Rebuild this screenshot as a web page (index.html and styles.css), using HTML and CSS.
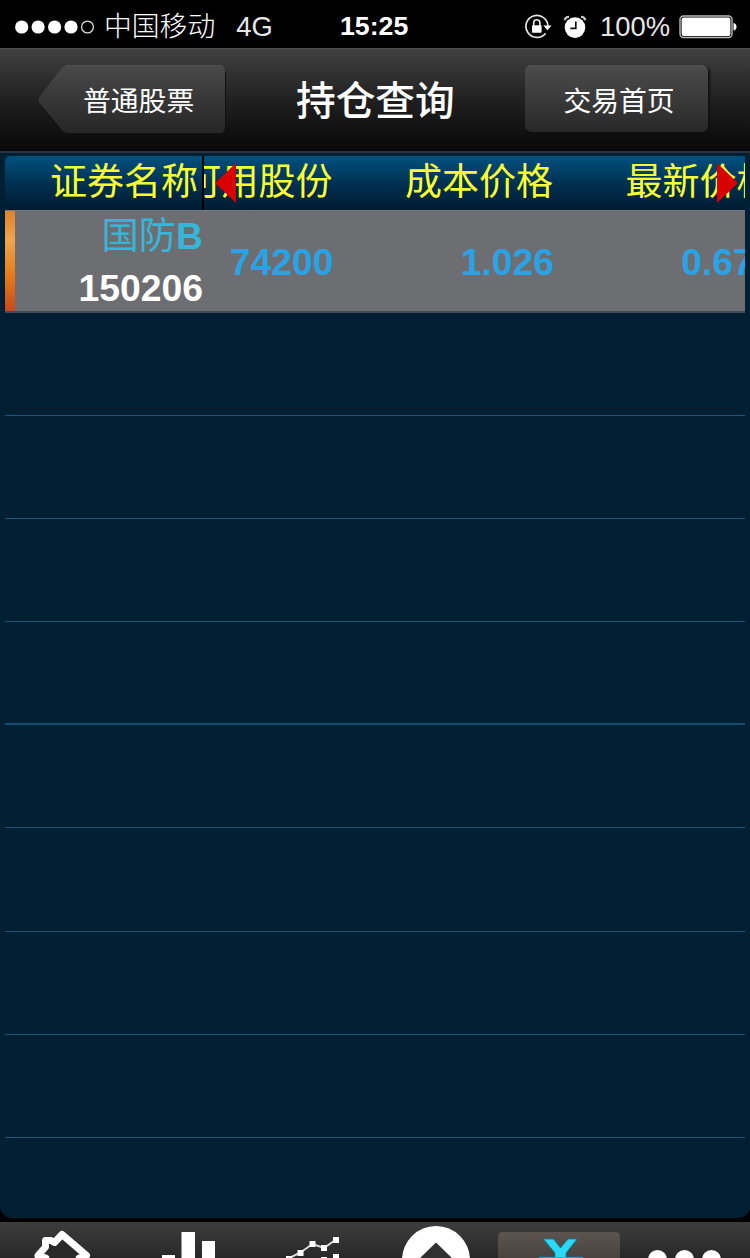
FILE: index.html
```html
<!DOCTYPE html>
<html lang="zh-CN">
<head>
<meta charset="utf-8">
<title>持仓查询</title>
<link rel="stylesheet" href="styles.css">
</head>
<body>
<div class="screen">
  <header class="status">
    <div class="status-left">
      <svg class="signal" width="80" height="16" viewBox="0 0 80 16" fill="#fff">
        <circle cx="6.7" cy="8" r="6.6"/><circle cx="23.1" cy="8" r="6.6"/><circle cx="39.6" cy="8" r="6.6"/><circle cx="56" cy="8" r="6.6"/>
        <circle cx="72.5" cy="8" r="5.9" fill="none" stroke="#ddd" stroke-width="1.3"/>
      </svg>
      <span class="carrier">中国移动</span>
      <span class="network">4G</span>
    </div>
    <span class="clock">15:25</span>
    <div class="status-right">
      <svg class="lock" width="30" height="26" viewBox="0 0 30 26">
        <path d="M21.600 19.200A11 11 0 1 1 23.900 12" fill="none" stroke="#e4e4e4" stroke-width="1.700"/>
        <path d="M19.400 11.600h8.200l-4.100 4.600z" fill="#fff"/>
        <rect x="8" y="11.300" width="9.600" height="7.500" rx=".8" fill="#fff"/>
        <path d="M9.700 12V8.800a3.100 3.100 0 0 1 6.200 0V12" fill="none" stroke="#eee" stroke-width="1.600"/>
      </svg>
      <svg class="alarm" width="24" height="24" viewBox="0 0 24 24">
        <circle cx="12" cy="12.600" r="10.300" fill="#fff"/>
        <path d="M12.800 6.500V13.300H7.300" fill="none" stroke="#111" stroke-width="1.700"/>
        <path d="M1.600 5.200Q2.500 1.900 6.100 1.800M17.900 1.800Q21.500 1.900 22.400 5.200" fill="none" stroke="#ccc" stroke-width="2"/>
      </svg>
      <span class="percent">100%</span>
      <svg class="battery" width="58" height="24" viewBox="0 0 58 24">
        <rect x="1" y="1" width="52" height="21.500" rx="3.500" fill="none" stroke="#bbb" stroke-width="1.400"/>
        <rect x="2.600" y="2.600" width="48.800" height="18.300" rx="2" fill="#fff"/>
        <path d="M54.500 8q3 .5 3 3.800t-3 3.800z" fill="#fff"/>
      </svg>
    </div>
  </header>

  <nav class="navbar">
    <div class="back">
      <svg class="back-shape" width="194" height="74" viewBox="0 0 194 74">
        <defs><linearGradient id="back" x1="0" y1="0" x2="0" y2="1"><stop offset="0" stop-color="#494949"/><stop offset="1" stop-color="#262626"/></linearGradient></defs>
        <path d="M30 3H182Q189 3 189 9V64Q189 70 182 70H30Q26 70 23 66L5 43Q1 37 5 32L22 9Q26 3 30 3Z" fill="#111"/>
        <path d="M31 0H182Q188 0 188 6V62Q188 68 182 68H31Q27 68 24 64L3 39Q0 35 3 31L23 5Q27 0 31 0Z" fill="url(#back)"/>
        <path d="M29 .5H184" stroke="#505050" fill="none"/>
      </svg>
      <span class="back-label">普通股票</span>
    </div>
    <h1 class="title">持仓查询</h1>
    <div class="home">交易首页</div>
  </nav>

  <main class="panel">
    <div class="table">
      <section class="names">
        <div class="head name-head">证券名称</div>
        <div class="holding name-cell">
          <span class="stock">国防<b>B</b></span>
          <span class="code">150206</span>
        </div>
      </section>
      <section class="values">
        <div class="head value-row"><span>可用股份</span><span>成本价格</span><span>最新价格</span></div>
        <div class="holding value-row numbers"><span>74200</span><span>1.026</span><span>0.670</span></div>
        <svg class="arrow arrow-left" width="22" height="40" viewBox="0 0 22 40"><path d="M0 20 21 0V40Z" fill="#d90000"/></svg>
        <svg class="arrow arrow-right" width="21" height="40" viewBox="0 0 21 40"><path d="M21 20 0 0V40Z" fill="#d90000"/></svg>
      </section>
    </div>
    <div class="empty"></div><div class="empty"></div><div class="empty"></div><div class="empty strong"></div><div class="empty"></div><div class="empty"></div><div class="empty"></div><div class="empty"></div>
  </main>

  <footer class="tabs">
    <div class="tab">
      <svg width="125" height="36" viewBox="0 0 125 36">
        <path d="M46 39V36L38 33.500 45.500 25V18.500H51L54.500 20.500 62 12.500 86.500 33.500 79 36V39" fill="#292929" stroke="#fff" stroke-width="7" stroke-linejoin="round"/>
      </svg>
    </div>
    <div class="tab">
      <svg width="125" height="36" viewBox="0 0 125 36" fill="#fff"><path d="M37 33h13v3H37zM56.500 10h13.500v26H56.500zM77 19h13v17H77z"/></svg>
    </div>
    <div class="tab">
      <svg width="125" height="36" viewBox="0 0 125 36">
        <path d="M30 40 38.500 36.500 50.500 30.500 62.500 22 74 26 86 17.500" fill="none" stroke="#ddd" stroke-width="2"/>
        <path d="M83 15h6v6h-6zM71 23h6v6h-6zM59.500 19h6v6h-6zM47.500 28h6v6h-6zM36 34h6v2h-6zM83 32h6v4h-6zM71 35h6v1h-6z" fill="#fff"/>
      </svg>
    </div>
    <div class="tab">
      <svg width="125" height="36" viewBox="0 0 125 36"><circle cx="61" cy="38" r="34" fill="#fff"/><path d="M42 39 61 20.500 80 39Z" fill="#303030"/></svg>
    </div>
    <div class="tab">
      <svg width="125" height="36" viewBox="0 0 125 36">
        <defs><linearGradient id="active" x1="0" y1="0" x2="0" y2="1"><stop offset="0" stop-color="#5b544f"/><stop offset="1" stop-color="#49433f"/></linearGradient></defs>
        <path d="M-2 36V15Q-2 10 3 10H115Q120 10 120 15V36Z" fill="url(#active)"/>
        <path d="M43.500 17H53.500L60.500 26 68 17H77L66 31V35H83V36H39V35H55V31Z" fill="#29d9f5" stroke="#087f9c" stroke-width=".8"/>
      </svg>
    </div>
    <div class="tab">
      <svg width="125" height="36" viewBox="0 0 125 36" fill="#fff"><circle cx="32.500" cy="37.500" r="9.500"/><circle cx="59.500" cy="37.500" r="9.500"/><circle cx="86.500" cy="37.500" r="9.500"/></svg>
    </div>
  </footer>
</div>
</body>
</html>
```
FILE: styles.css
```css
* { box-sizing: border-box; }
body {
  margin: 0;
  background: #000;
  color: #fff;
  font-family: "Liberation Sans", "Noto Sans CJK SC", sans-serif;
}
svg { display: block; flex: none; }
.screen {
  width: 750px;
  height: 1258px;
  overflow: hidden;
  display: flex;
  flex-direction: column;
}
.status {
  height: 48px;
  flex: none;
  display: grid;
  grid-template-columns: 340px 1fr auto;
  align-items: center;
  padding: 3px 13px 0 0;
  font-size: 27.4px;
  line-height: 47px;
  white-space: nowrap;
}
.status-left, .status-right { display: flex; align-items: center; height: 45px; }
.signal { margin-left: 15px; }
.carrier { margin-left: 9px; color: #fff; font-weight: 300; font-size: 27.8px; }
.network { margin-left: 21px; font-size: 27.3px; color: #e6e6e6; }
.clock { font-size: 26.7px; font-weight: 700; }
.alarm { margin-left: 9px; }
.percent { margin-left: 13px; color: #e6e6e6; }
.battery { margin-left: 9px; }

.navbar {
  height: 103px;
  flex: none;
  display: flex;
  align-items: flex-start;
  padding: 16px 42px 0 37px;
  background: linear-gradient(#414141, #202020 50%, #080808);
  border-top: 1px solid #4c4c4c;
}
.back { display: grid; width: 194px; height: 74px; }
.back > * { grid-area: 1 / 1; }
.back-label { padding: 1px 0 0 46px; font-size: 27.8px; line-height: 72px; }
.title { margin: 0 0 0 65px; width: 229px; font-size: 39.7px; font-weight: 500; line-height: 72px; }
.home {
  width: 183px;
  height: 67px;
  padding-left: 5px;
  border-radius: 7px;
  background: linear-gradient(#4c4c4c, #282828);
  box-shadow: inset 0 1px #525252, 2px 1px 2px #111;
  font-size: 27.8px;
  line-height: 73px;
  text-align: center;
}

.panel {
  height: 1067px;
  flex: none;
  padding: 3px 5px 0;
  background: #001f33;
  border-top: 2px solid #293440;
  border-radius: 0 0 12px 12px;
}
.table { display: flex; height: 157px; }
.names { width: 199px; flex: none; }
.values { position: relative; width: 541px; overflow: hidden; }
.head {
  height: 54px;
  background: linear-gradient(#00517f, #003153 50%, #001b30);
  color: #fbff32;
  font-size: 37px;
  line-height: 54px;
  white-space: nowrap;
}
.name-head {
  padding-left: 45px;
  border-right: 2px solid #000;
  border-radius: 5px 0 0;
}
.holding {
  height: 103px;
  background: #6d6e72;
  border-bottom: 2px solid #3e4b57;
  box-shadow: inset 0 1px #747a85;
  font-size: 37.3px;
  font-weight: 700;
}
.name-cell {
  display: flex;
  flex-direction: column;
  padding: 1px 1px 0 0;
  text-align: right;
  background: linear-gradient(#df8128, #efa44d 30%, #e67b18 65%, #c9481f) left / 10px 100% no-repeat, #6d6e72;
}
.stock, .code { line-height: 51px; height: 51px; }
.stock { color: #35b7d9; font-weight: 400; }
.code { padding-top: 1px; color: #fff; }
.value-row { display: flex; width: 573px; }
.value-row span { width: 220.500px; flex: none; text-align: right; }
.head.value-row span:first-child { margin-left: -92px; }
.numbers { line-height: 104px; color: #29a3e5; }
.numbers span:first-child { margin-left: -91px; }
.arrow { position: absolute; top: 7px; }
.arrow-left { left: 11px; }
.arrow-right { right: 7px; }
.empty { height: 103.100px; border-bottom: 1px solid #15527c; }
.strong { border-bottom: 2px solid #124d73; }

.tabs {
  height: 40px;
  flex: none;
  display: grid;
  grid-template-columns: repeat(6, 125px);
  border-top: 4px solid #000;
  background: linear-gradient(#3d3d3d, #282828);
}
.tab { height: 36px; }
.tab svg { overflow: visible; }
```
